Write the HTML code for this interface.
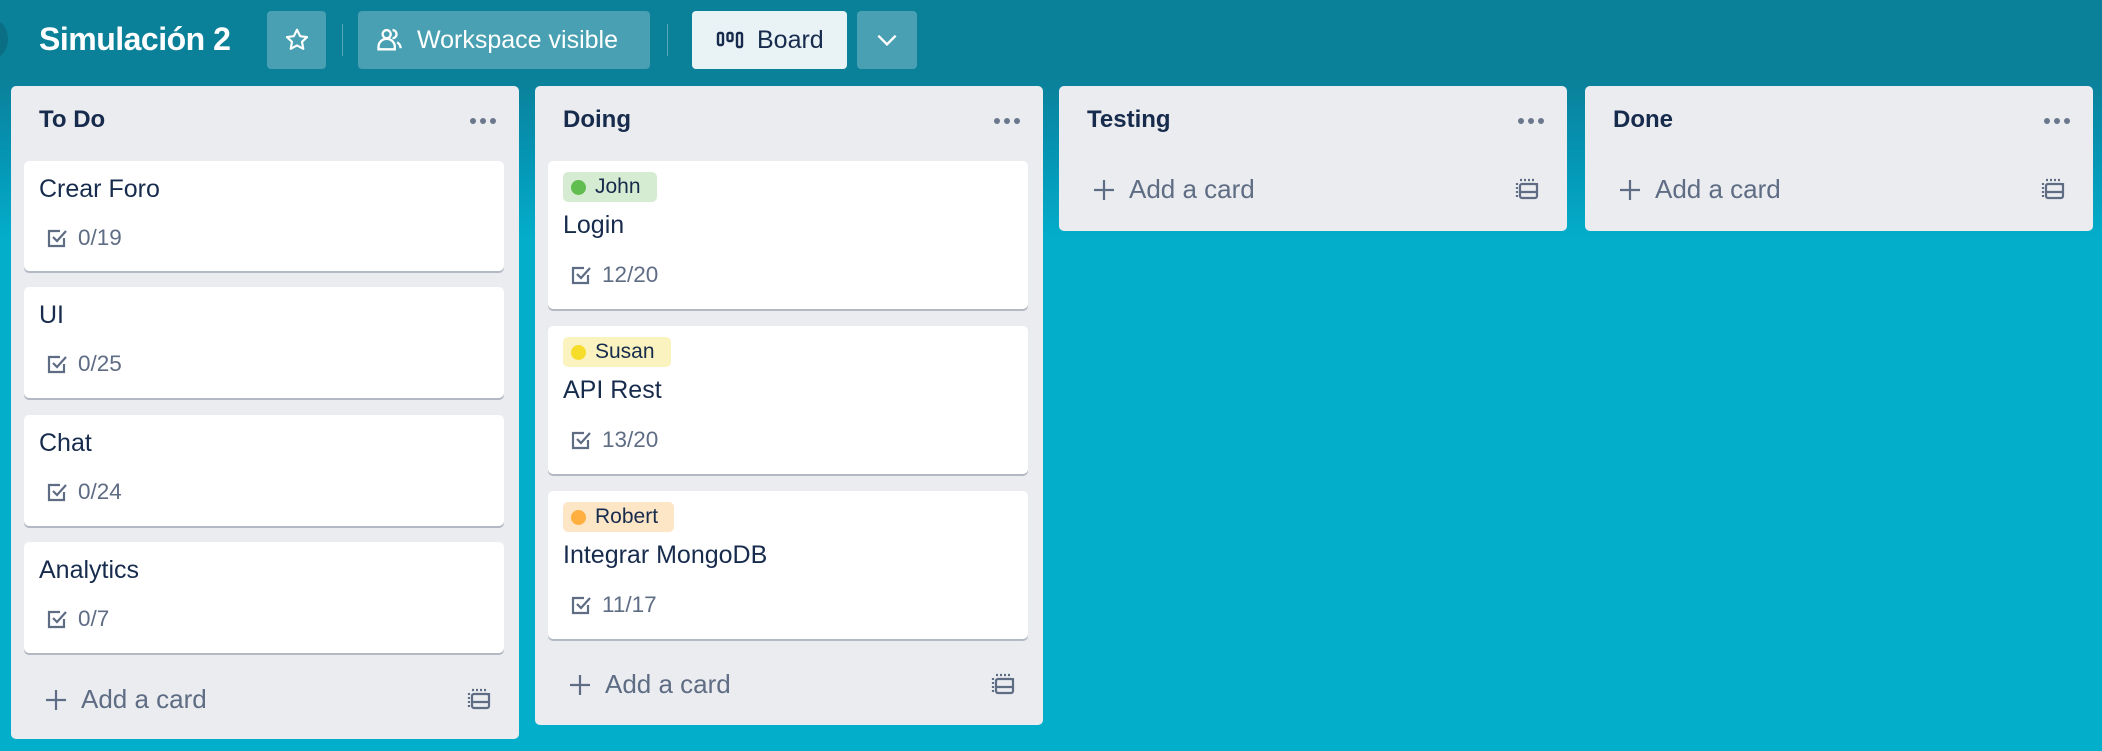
<!DOCTYPE html>
<html><head><meta charset="utf-8"><style>
*{box-sizing:border-box;margin:0;padding:0}
body{width:2102px;height:751px;overflow:hidden;font-family:"Liberation Sans",sans-serif;color:#172b4d;
background:linear-gradient(180deg,#0b7f98 0px,#0b8099 78px,#0593b2 150px,#03aecb 240px,#03aecb 751px);position:relative}
.hdr{position:absolute;left:0;top:0;width:2102px;height:78px;background:#0b8199}
.title{position:absolute;left:39px;top:21px;font-size:32px;font-weight:bold;color:#fff;letter-spacing:-0.5px}
.btn{position:absolute;top:11px;height:58px;border-radius:4px;background:rgba(255,255,255,0.25);color:#fff;font-size:25px;display:flex;align-items:center}
.sep{position:absolute;top:24px;width:1px;height:32px;background:rgba(255,255,255,0.3)}
.list{position:absolute;width:508px;background:#ebecf0;border-radius:5px}
.lh{position:absolute;left:28px;top:105px;font-size:24px;font-weight:bold}
.dots{position:absolute;display:flex;gap:4px}
.dots i{width:6px;height:6px;border-radius:50%;background:#6b778c;display:block}
.card{position:absolute;left:13px;width:480px;background:#fff;border-radius:5px;box-shadow:0 2px 0 #b3b9c4}
.ct{position:absolute;left:15px;font-size:25px}
.chk{position:absolute;left:22px;display:flex;align-items:center;color:#5e6c84;font-size:22.5px}
.chk svg{margin-right:10px}
.lab{position:absolute;left:15px;top:11px;height:30px;border-radius:5px;font-size:21px;display:flex;align-items:center;padding:0 16px 0 8px}
.lab b{width:15px;height:15px;border-radius:50%;margin-right:9px;display:block}
.add{position:absolute;left:33px;display:flex;align-items:center;color:#5e6c84;font-size:26px}
.add svg{margin-right:13px}
.tpl{position:absolute;right:28px}
</style></head><body>
<div class="hdr"></div>
<div style="position:absolute;left:-20px;top:20px;width:28px;height:38px;border-radius:50%;background:#0a6f85"></div>
<div class="title">Simulación 2</div>
<div class="btn" style="left:267px;width:59px;justify-content:center"><svg width="26" height="26" viewBox="0 0 24 24" fill="none" stroke="#fff" stroke-width="2" stroke-linejoin="round"><path d="M12 2.5l2.9 6 6.4.8-4.7 4.4 1.2 6.4L12 17l-5.8 3.1 1.2-6.4L2.7 9.3l6.4-.8z"/></svg></div>
<div class="sep" style="left:342px"></div>
<div class="btn" style="left:358px;width:292px;padding-left:17px"><svg width="28" height="28" viewBox="0 0 24 24" fill="none" stroke="#fff" stroke-width="2"><circle cx="10" cy="7" r="3.5"/><path d="M3 20v-2a7 7 0 0 1 14 0v2z"/><path d="M15 3.5a3.5 3.5 0 0 1 0 7M19 14a6 6 0 0 1 3 5"/></svg><span style="margin-left:14px">Workspace visible</span></div>
<div class="sep" style="left:667px"></div>
<div class="btn" style="left:692px;width:155px;background:#e9f2f5;color:#172b4d;padding-left:24px"><svg width="28" height="20" viewBox="0 0 28 20" fill="none" stroke="#172b4d" stroke-width="2.4"><rect x="2" y="3" width="5" height="12" rx="1.5"/><rect x="11.5" y="3" width="5" height="8" rx="1.5"/><rect x="21" y="3" width="5" height="14" rx="1.5"/></svg><span style="margin-left:13px">Board</span></div>
<div class="btn" style="left:857px;width:60px;justify-content:center"><svg width="26" height="26" viewBox="0 0 24 24" fill="none" stroke="#fff" stroke-width="2.2"><path d="M4 8l8 8 8-8"/></svg></div>

<!-- To Do -->
<div class="list" style="left:11px;top:86px;height:653px">
<div class="lh" style="top:20px">To Do</div>
<div class="dots" style="left:459px;top:32px"><i></i><i></i><i></i></div>
<div class="card" style="top:75px;height:110px"><div class="ct" style="top:14px">Crear Foro</div><div class="chk" style="top:64px"><svg width="22" height="22" viewBox="0 0 22 22" fill="none" stroke="#5e6c84" stroke-width="2.2"><path d="M18 11v8H3V4h11"/><path d="M7 10l4 4 9-10"/></svg>0/19</div></div>
<div class="card" style="top:201px;height:111px"><div class="ct" style="top:14px">UI</div><div class="chk" style="top:64px"><svg width="22" height="22" viewBox="0 0 22 22" fill="none" stroke="#5e6c84" stroke-width="2.2"><path d="M18 11v8H3V4h11"/><path d="M7 10l4 4 9-10"/></svg>0/25</div></div>
<div class="card" style="top:329px;height:111px"><div class="ct" style="top:14px">Chat</div><div class="chk" style="top:64px"><svg width="22" height="22" viewBox="0 0 22 22" fill="none" stroke="#5e6c84" stroke-width="2.2"><path d="M18 11v8H3V4h11"/><path d="M7 10l4 4 9-10"/></svg>0/24</div></div>
<div class="card" style="top:456px;height:111px"><div class="ct" style="top:14px">Analytics</div><div class="chk" style="top:64px"><svg width="22" height="22" viewBox="0 0 22 22" fill="none" stroke="#5e6c84" stroke-width="2.2"><path d="M18 11v8H3V4h11"/><path d="M7 10l4 4 9-10"/></svg>0/7</div></div>
<div class="add" style="top:598px"><svg width="24" height="24" viewBox="0 0 24 24" stroke="#5e6c84" stroke-width="2.2"><path d="M12 2v20M2 12h20"/></svg>Add a card</div>
<svg class="tpl" style="top:601px" width="24" height="24" viewBox="0 0 24 24" fill="none" stroke="#5e6c84" stroke-width="2.2"><path d="M5 3h14M2 6v14M22 6v2" stroke-dasharray="2 2"/><rect x="5" y="7" width="17" height="14" rx="2"/><path d="M5 15h17" /></svg>
</div>

<!-- Doing -->
<div class="list" style="left:535px;top:86px;height:639px">
<div class="lh" style="top:20px">Doing</div>
<div class="dots" style="left:459px;top:32px"><i></i><i></i><i></i></div>
<div class="card" style="top:75px;height:148px"><div class="lab" style="background:#d6ecd2"><b style="background:#61bd4f"></b>John</div><div class="ct" style="top:50px">Login</div><div class="chk" style="top:101px"><svg width="22" height="22" viewBox="0 0 22 22" fill="none" stroke="#5e6c84" stroke-width="2.2"><path d="M18 11v8H3V4h11"/><path d="M7 10l4 4 9-10"/></svg>12/20</div></div>
<div class="card" style="top:240px;height:148px"><div class="lab" style="background:#faf3c0"><b style="background:#f5dd29"></b>Susan</div><div class="ct" style="top:50px">API Rest</div><div class="chk" style="top:101px"><svg width="22" height="22" viewBox="0 0 22 22" fill="none" stroke="#5e6c84" stroke-width="2.2"><path d="M18 11v8H3V4h11"/><path d="M7 10l4 4 9-10"/></svg>13/20</div></div>
<div class="card" style="top:405px;height:148px"><div class="lab" style="background:#fce6c6"><b style="background:#ffaf3f"></b>Robert</div><div class="ct" style="top:50px">Integrar MongoDB</div><div class="chk" style="top:101px"><svg width="22" height="22" viewBox="0 0 22 22" fill="none" stroke="#5e6c84" stroke-width="2.2"><path d="M18 11v8H3V4h11"/><path d="M7 10l4 4 9-10"/></svg>11/17</div></div>
<div class="add" style="top:583px"><svg width="24" height="24" viewBox="0 0 24 24" stroke="#5e6c84" stroke-width="2.2"><path d="M12 2v20M2 12h20"/></svg>Add a card</div>
<svg class="tpl" style="top:586px" width="24" height="24" viewBox="0 0 24 24" fill="none" stroke="#5e6c84" stroke-width="2.2"><path d="M5 3h14M2 6v14M22 6v2" stroke-dasharray="2 2"/><rect x="5" y="7" width="17" height="14" rx="2"/><path d="M5 15h17"/></svg>
</div>

<!-- Testing -->
<div class="list" style="left:1059px;top:86px;height:145px">
<div class="lh" style="top:20px">Testing</div>
<div class="dots" style="left:459px;top:32px"><i></i><i></i><i></i></div>
<div class="add" style="top:88px"><svg width="24" height="24" viewBox="0 0 24 24" stroke="#5e6c84" stroke-width="2.2"><path d="M12 2v20M2 12h20"/></svg>Add a card</div>
<svg class="tpl" style="top:91px" width="24" height="24" viewBox="0 0 24 24" fill="none" stroke="#5e6c84" stroke-width="2.2"><path d="M5 3h14M2 6v14M22 6v2" stroke-dasharray="2 2"/><rect x="5" y="7" width="17" height="14" rx="2"/><path d="M5 15h17"/></svg>
</div>

<!-- Done -->
<div class="list" style="left:1585px;top:86px;height:145px">
<div class="lh" style="top:20px">Done</div>
<div class="dots" style="left:459px;top:32px"><i></i><i></i><i></i></div>
<div class="add" style="top:88px"><svg width="24" height="24" viewBox="0 0 24 24" stroke="#5e6c84" stroke-width="2.2"><path d="M12 2v20M2 12h20"/></svg>Add a card</div>
<svg class="tpl" style="top:91px" width="24" height="24" viewBox="0 0 24 24" fill="none" stroke="#5e6c84" stroke-width="2.2"><path d="M5 3h14M2 6v14M22 6v2" stroke-dasharray="2 2"/><rect x="5" y="7" width="17" height="14" rx="2"/><path d="M5 15h17"/></svg>
</div>
</body></html>
